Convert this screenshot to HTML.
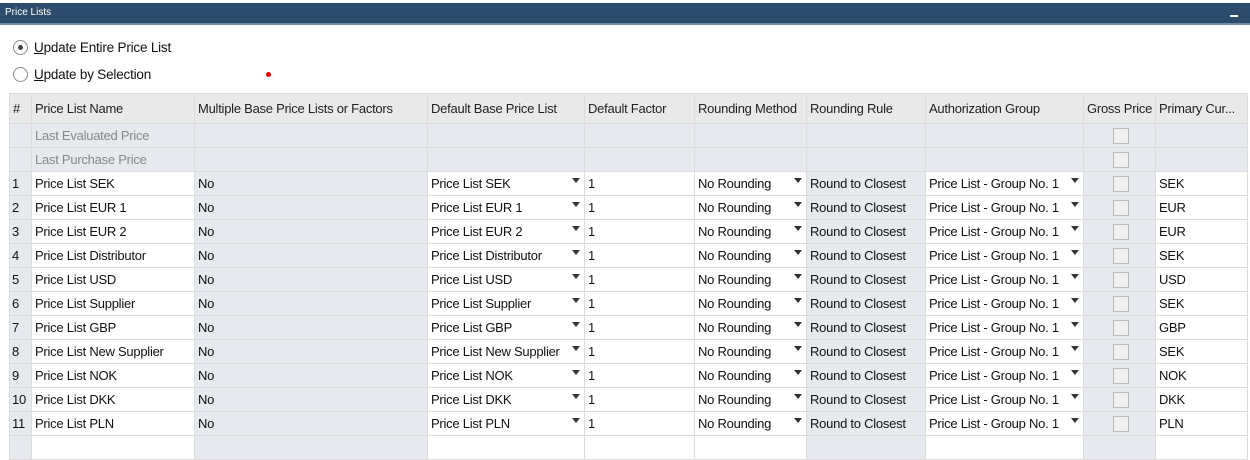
<!DOCTYPE html>
<html><head><style>
body{margin:0;width:1250px;height:460px;background:#fff;font-family:"Liberation Sans",sans-serif;font-size:13px;color:#111;position:relative;overflow:hidden}
.tb{position:absolute;left:0;top:3px;width:1250px;height:20px;background:#2d4b6b;border-bottom:2px solid #6f89a6}
.tb span{position:absolute;left:5px;top:4px;color:#fff;font-size:10px}
.tb i{position:absolute;right:12px;top:12px;width:8px;height:2px;background:#fff}
.r{position:absolute;left:34px;font-size:13.5px;letter-spacing:-0.2px}
.rc{position:absolute;left:13px;width:13px;height:13px;border:1px solid #8a8a8a;border-radius:50%;background:#fff}
.dot{position:absolute;left:266px;top:72px;width:5px;height:5px;border-radius:50%;background:#e00}
table{position:absolute;left:9px;top:93px;border-collapse:collapse;table-layout:fixed}
td{height:23px;border:1px solid #dcdcdc;padding:0 0 0 3px;white-space:nowrap;overflow:hidden;position:relative;font-size:13px;letter-spacing:-0.25px}
tr.h td{height:29px;background:#e9e9e9;color:#222}
.g{background:#e6eaee}
.gt{color:#888}
.w{background:#fff}
.a{position:absolute;right:4px;top:6px;width:0;height:0;border-left:4px solid transparent;border-right:4px solid transparent;border-top:5px solid #333}
.cb{display:block;margin:0 auto;width:14px;height:14px;border:1px solid #bbb;background:#f0f0f0;padding:0}
</style></head><body>
<div class="tb"><span>Price Lists</span><i></i></div>
<div class="rc" style="top:40px"><div style="width:5px;height:5px;border-radius:50%;background:#444;margin:4px"></div></div>
<div class="r" style="top:40px"><u>U</u>pdate Entire Price List</div>
<div class="rc" style="top:67px"></div>
<div class="r" style="top:67px"><u>U</u>pdate by Selection</div>
<div class="dot"></div>
<table>
<colgroup><col style="width:22px"><col style="width:163px"><col style="width:233px"><col style="width:157px"><col style="width:110px"><col style="width:112px"><col style="width:119px"><col style="width:158px"><col style="width:72px"><col style="width:92px"></colgroup>
<tr class="h"><td>#</td><td>Price List Name</td><td>Multiple Base Price Lists or Factors</td><td>Default Base Price List</td><td>Default Factor</td><td>Rounding Method</td><td>Rounding Rule</td><td>Authorization Group</td><td>Gross Price</td><td>Primary Cur...</td></tr>
<tr><td class="g"></td><td class="g gt">Last Evaluated Price</td><td class="g"></td><td class="g"></td><td class="g"></td><td class="g"></td><td class="g"></td><td class="g"></td><td class="g"><span class="cb"></span></td><td class="g"></td></tr>
<tr><td class="g"></td><td class="g gt">Last Purchase Price</td><td class="g"></td><td class="g"></td><td class="g"></td><td class="g"></td><td class="g"></td><td class="g"></td><td class="g"><span class="cb"></span></td><td class="g"></td></tr>
<script>
var d=[["Price List SEK","SEK"],["Price List EUR 1","EUR"],["Price List EUR 2","EUR"],["Price List Distributor","SEK"],["Price List USD","USD"],["Price List Supplier","SEK"],["Price List GBP","GBP"],["Price List New Supplier","SEK"],["Price List NOK","NOK"],["Price List DKK","DKK"],["Price List PLN","PLN"]];
d.forEach(function(r,i){document.write('<tr><td class="g" style="padding-left:2px">'+(i+1)+'</td><td class="w">'+r[0]+'</td><td class="g">No</td><td class="w">'+r[0]+'<span class="a"></span></td><td class="w">1</td><td class="w">No Rounding<span class="a"></span></td><td class="g">Round to Closest</td><td class="w">Price List - Group No. 1<span class="a"></span></td><td class="g"><span class="cb"></span></td><td class="w">'+r[1]+'</td></tr>')});
</script>
<tr><td class="g"></td><td class="w"></td><td class="g"></td><td class="w"></td><td class="w"></td><td class="w"></td><td class="g"></td><td class="w"></td><td class="g"></td><td class="w"></td></tr>
</table>
</body></html>
